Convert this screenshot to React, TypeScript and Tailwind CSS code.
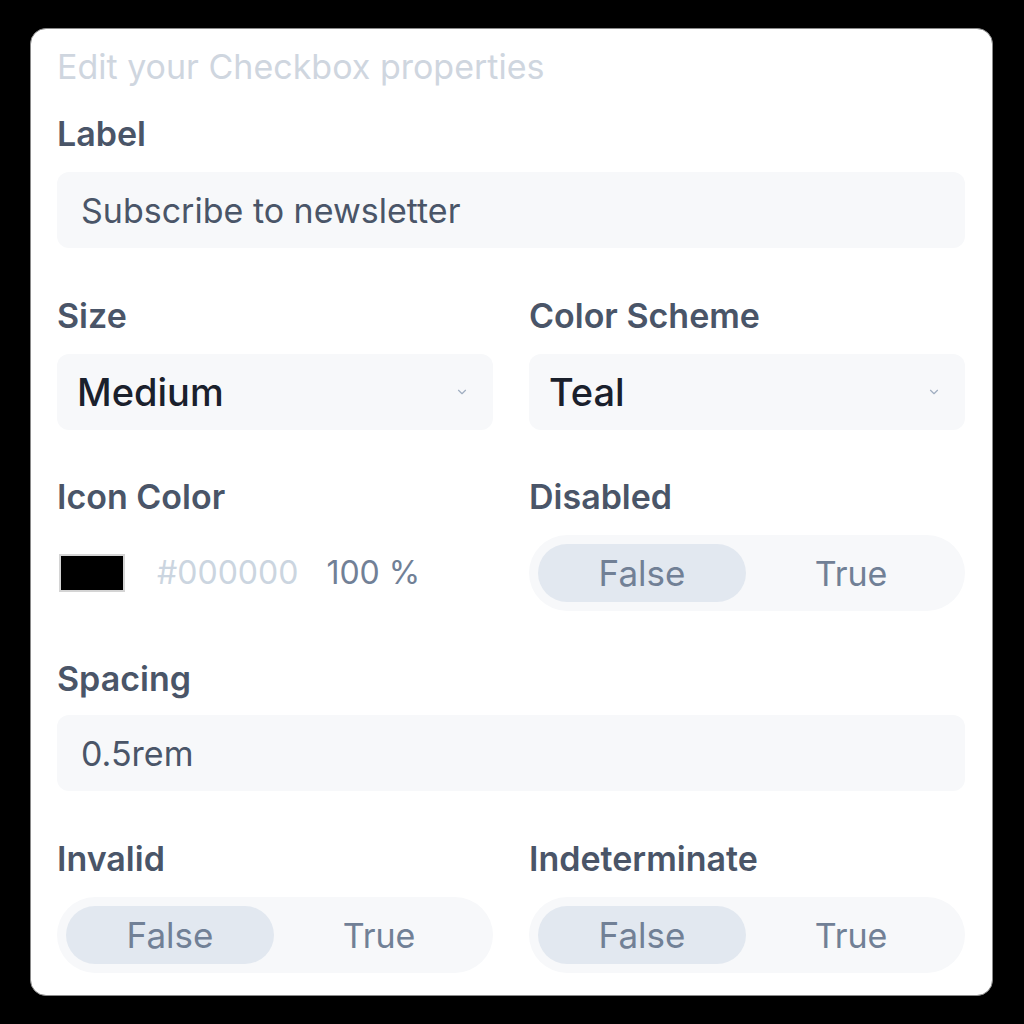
import { ChevronDown } from "lucide-react";

function FieldLabel({ children }: { children: React.ReactNode }) {
  return <div className="text-[34px] leading-[36px] font-semibold text-[#4a5568]">{children}</div>;
}

function TextInput({ value }: { value: string }) {
  return (
    <div className="h-[76px] rounded-xl bg-[#f7f8fa] px-6 flex items-center text-[34px] text-[#4a5568]">
      {value}
    </div>
  );
}

function Select({ value }: { value: string }) {
  return (
    <div className="h-[76px] rounded-xl bg-[#f7f8fa] pl-5 pr-6 flex items-center justify-between">
      <span className="text-[38px] font-medium text-[#1a202c]">{value}</span>
      <ChevronDown className="w-[14px] h-[14px] text-[#a0aec0]" strokeWidth={2} />
    </div>
  );
}

function Toggle() {
  return (
    <div className="h-[76px] rounded-full bg-[#f7f8fa] p-[9px] flex">
      <div className="w-[208px] rounded-full bg-[#e2e8f0] flex items-center justify-center text-[35px] text-[#718096]">
        False
      </div>
      <div className="flex-1 flex items-center justify-center text-[34px] text-[#718096]">True</div>
    </div>
  );
}

export default function App() {
  return (
    <div className="min-h-screen bg-black pt-[28px] pl-[30px]" style={{ fontFamily: "Inter, 'Noto Sans', sans-serif" }}>
      <div className="w-[963px] h-[968px] rounded-2xl bg-white border border-[#8a8a8a] pl-[26px] pr-[27px] pt-5 pb-6 flex flex-col">
        <div className="text-[34px] leading-[36px] text-[#cfd6df]">Edit your Checkbox properties</div>

        <div className="mt-[31px] flex flex-col gap-5">
          <FieldLabel>Label</FieldLabel>
          <TextInput value="Subscribe to newsletter" />
        </div>

        <div className="mt-[50px] grid grid-cols-2 gap-x-9">
          <div className="flex flex-col gap-5">
            <FieldLabel>Size</FieldLabel>
            <Select value="Medium" />
          </div>
          <div className="flex flex-col gap-5">
            <FieldLabel>Color Scheme</FieldLabel>
            <Select value="Teal" />
          </div>
        </div>

        <div className="mt-[49px] grid grid-cols-2 gap-x-9">
          <div className="flex flex-col gap-5">
            <FieldLabel>Icon Color</FieldLabel>
            <div className="h-[76px] flex items-center gap-8">
              <div className="w-[66px] h-[38px] bg-black border-2 border-[#d4d4d4] ml-[2px]" />
              <div className="flex items-center gap-7 text-[32px]">
                <span className="text-[#cbd5e0]">#000000</span>
                <span className="text-[#718096]">100 %</span>
              </div>
            </div>
          </div>
          <div className="flex flex-col gap-5">
            <FieldLabel>Disabled</FieldLabel>
            <Toggle />
          </div>
        </div>

        <div className="mt-[50px] flex flex-col gap-[18px]">
          <FieldLabel>Spacing</FieldLabel>
          <TextInput value="0.5rem" />
        </div>

        <div className="mt-[50px] grid grid-cols-2 gap-x-9">
          <div className="flex flex-col gap-5">
            <FieldLabel>Invalid</FieldLabel>
            <Toggle />
          </div>
          <div className="flex flex-col gap-5">
            <FieldLabel>Indeterminate</FieldLabel>
            <Toggle />
          </div>
        </div>
      </div>
    </div>
  );
}
